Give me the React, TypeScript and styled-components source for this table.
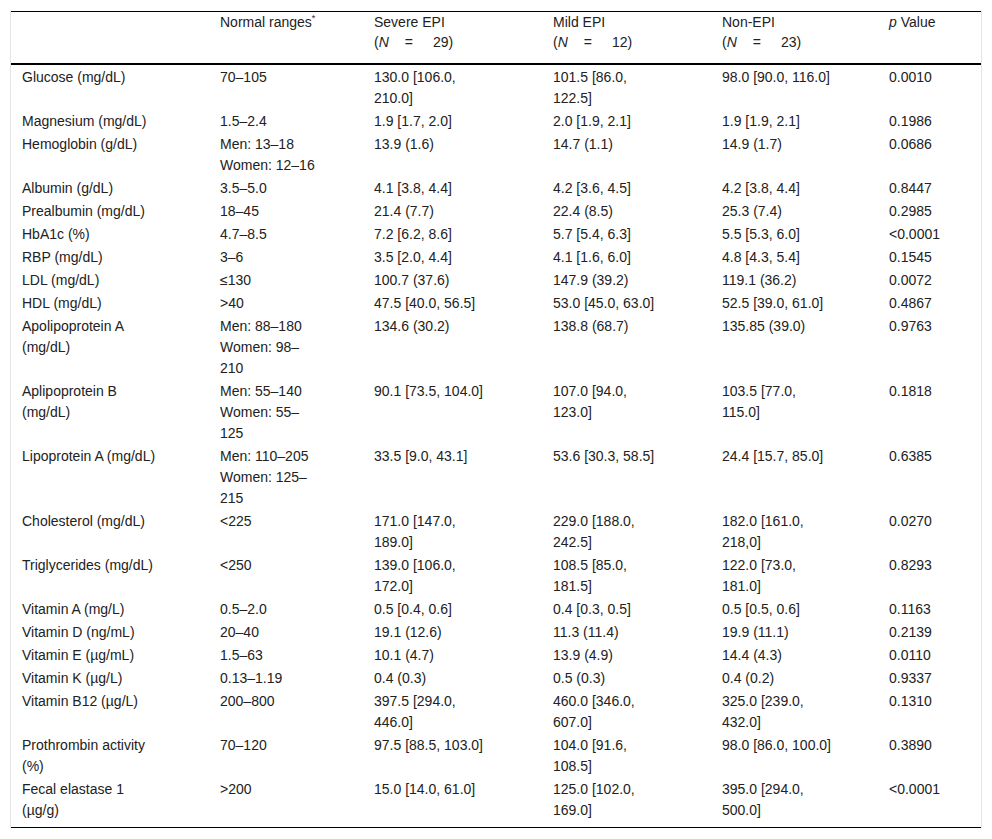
import React, { FC } from 'react';
import styled, { createGlobalStyle } from 'styled-components';

const GlobalStyle = createGlobalStyle`
  body {
    margin: 0;
    background: #fff;
    font-family: "Liberation Sans", Arial, sans-serif;
    color: #222;
  }
`;

const TableFrame = styled.div`
  margin: 10px 10px 0;
  padding-top: 1px;
  border-left: 1px solid #e4e4e4;
  border-right: 1px solid #e4e4e4;
`;

const Table = styled.table`
  width: 970px;
  border-collapse: collapse;
  table-layout: fixed;
  font-size: 14px;
  border-top: 1px solid #000;
  border-bottom: 1px solid #000;
`;

const Col = styled.col<{ $w: number }>`
  width: ${(p) => p.$w}px;
`;

const HeadRow = styled.tr`
  border-bottom: 2px solid #000;
`;

const Th = styled.th<{ $last?: boolean }>`
  text-align: left;
  font-weight: normal;
  vertical-align: top;
  line-height: 20px;
  padding: 0 ${(p) => (p.$last ? '11px' : '45px')} 11px 11px;
`;

const BodyRow = styled.tr`
  &:last-child td {
    padding-bottom: 6px;
  }
`;

const Td = styled.td<{ $last?: boolean }>`
  vertical-align: top;
  line-height: 21px;
  padding: 2px ${(p) => (p.$last ? '11px' : '45px')} 0 11px;
`;

const Sup = styled.sup`
  font-size: 9px;
  line-height: 0;
  vertical-align: 6px;
`;

const Eq = styled.span`
  margin: 0 20px 0 16px;
`;

const colWidths = [198, 154, 179, 169, 167, 103];

const rows: string[][] = [
  ['Glucose (mg/dL)', '70–105', '130.0 [106.0, 210.0]', '101.5 [86.0, 122.5]', '98.0 [90.0, 116.0]', '0.0010'],
  ['Magnesium (mg/dL)', '1.5–2.4', '1.9 [1.7, 2.0]', '2.0 [1.9, 2.1]', '1.9 [1.9, 2.1]', '0.1986'],
  ['Hemoglobin (g/dL)', 'Men: 13–18 Women: 12–16', '13.9 (1.6)', '14.7 (1.1)', '14.9 (1.7)', '0.0686'],
  ['Albumin (g/dL)', '3.5–5.0', '4.1 [3.8, 4.4]', '4.2 [3.6, 4.5]', '4.2 [3.8, 4.4]', '0.8447'],
  ['Prealbumin (mg/dL)', '18–45', '21.4 (7.7)', '22.4 (8.5)', '25.3 (7.4)', '0.2985'],
  ['HbA1c (%)', '4.7–8.5', '7.2 [6.2, 8.6]', '5.7 [5.4, 6.3]', '5.5 [5.3, 6.0]', '<0.0001'],
  ['RBP (mg/dL)', '3–6', '3.5 [2.0, 4.4]', '4.1 [1.6, 6.0]', '4.8 [4.3, 5.4]', '0.1545'],
  ['LDL (mg/dL)', '≤130', '100.7 (37.6)', '147.9 (39.2)', '119.1 (36.2)', '0.0072'],
  ['HDL (mg/dL)', '>40', '47.5 [40.0, 56.5]', '53.0 [45.0, 63.0]', '52.5 [39.0, 61.0]', '0.4867'],
  ['Apolipoprotein A (mg/dL)', 'Men: 88–180 Women: 98–210', '134.6 (30.2)', '138.8 (68.7)', '135.85 (39.0)', '0.9763'],
  ['Aplipoprotein B (mg/dL)', 'Men: 55–140 Women: 55–125', '90.1 [73.5, 104.0]', '107.0 [94.0, 123.0]', '103.5 [77.0, 115.0]', '0.1818'],
  ['Lipoprotein A (mg/dL)', 'Men: 110–205 Women: 125–215', '33.5 [9.0, 43.1]', '53.6 [30.3, 58.5]', '24.4 [15.7, 85.0]', '0.6385'],
  ['Cholesterol (mg/dL)', '<225', '171.0 [147.0, 189.0]', '229.0 [188.0, 242.5]', '182.0 [161.0, 218,0]', '0.0270'],
  ['Triglycerides (mg/dL)', '<250', '139.0 [106.0, 172.0]', '108.5 [85.0, 181.5]', '122.0 [73.0, 181.0]', '0.8293'],
  ['Vitamin A (mg/L)', '0.5–2.0', '0.5 [0.4, 0.6]', '0.4 [0.3, 0.5]', '0.5 [0.5, 0.6]', '0.1163'],
  ['Vitamin D (ng/mL)', '20–40', '19.1 (12.6)', '11.3 (11.4)', '19.9 (11.1)', '0.2139'],
  ['Vitamin E (µg/mL)', '1.5–63', '10.1 (4.7)', '13.9 (4.9)', '14.4 (4.3)', '0.0110'],
  ['Vitamin K (µg/L)', '0.13–1.19', '0.4 (0.3)', '0.5 (0.3)', '0.4 (0.2)', '0.9337'],
  ['Vitamin B12 (µg/L)', '200–800', '397.5 [294.0, 446.0]', '460.0 [346.0, 607.0]', '325.0 [239.0, 432.0]', '0.1310'],
  ['Prothrombin activity (%)', '70–120', '97.5 [88.5, 103.0]', '104.0 [91.6, 108.5]', '98.0 [86.0, 100.0]', '0.3890'],
  ['Fecal elastase 1 (µg/g)', '>200', '15.0 [14.0, 61.0]', '125.0 [102.0, 169.0]', '395.0 [294.0, 500.0]', '<0.0001'],
];

const GroupHead: FC<{ name: string; n: number }> = ({ name, n }) => (
  <Th>
    {name}
    <br />
    (<i>N</i>
    <Eq>=</Eq>
    {n})
  </Th>
);

const App: FC = () => {
  return (
    <>
      <GlobalStyle />
      <TableFrame>
        <Table>
          <colgroup>
            {colWidths.map((w, i) => (
              <Col key={i} $w={w} />
            ))}
          </colgroup>
          <thead>
            <HeadRow>
              <Th />
              <Th>
                Normal ranges<Sup>*</Sup>
              </Th>
              <GroupHead name="Severe EPI" n={29} />
              <GroupHead name="Mild EPI" n={12} />
              <GroupHead name="Non-EPI" n={23} />
              <Th $last>
                <i>p</i> Value
              </Th>
            </HeadRow>
          </thead>
          <tbody>
            {rows.map((r) => (
              <BodyRow key={r[0]}>
                {r.map((c, i) => (
                  <Td key={i} $last={i === 5}>
                    {c}
                  </Td>
                ))}
              </BodyRow>
            ))}
          </tbody>
        </Table>
      </TableFrame>
    </>
  );
};

export default App;
